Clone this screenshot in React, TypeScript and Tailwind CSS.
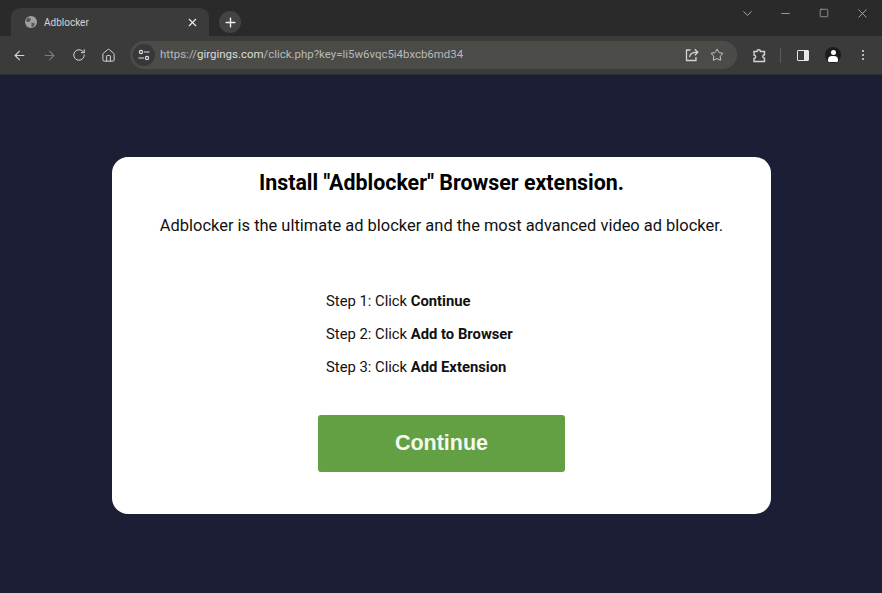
import { ArrowLeft, ArrowRight, ChevronDown, Home, Minus, Plus, RotateCw, Square, Star, X } from "lucide-react"

function Steps() {
  return (
    <div className="ml-[214px] mt-[52px] flex flex-col gap-[11px] text-[14.8px] leading-[22px] text-[#111]">
      <p>
        Step 1: Click <b className="font-bold">Continue</b>
      </p>
      <p>
        Step 2: Click <b className="font-bold">Add to Browser</b>
      </p>
      <p>
        Step 3: Click <b className="font-bold">Add Extension</b>
      </p>
    </div>
  )
}

export default function App() {
  return (
    <div className="flex h-[593px] w-[882px] flex-col overflow-hidden bg-[#1c1e36] font-['Roboto',sans-serif]">
      {/* Tab strip */}
      <div className="flex h-[36px] items-end bg-[#2a2a2a] pl-[11px]">
        <div className="flex h-[28px] w-[198px] items-center rounded-t-[9px] bg-[#3b3b3b] pl-[14px] pr-[10px] text-[#d6d6d6]">
          <svg width="12" height="12" viewBox="0 0 12 12">
            <circle cx="6" cy="6" r="6" fill="#a0a0a0" />
            <path d="M3 1.500l3 1.500-1 2.500-2.500 0.500L0.800 4.500zM6.500 6.500l3.500 1-1.500 3-2 0.500z" fill="#565656" />
          </svg>
          <span className="ml-[7px] flex-1 text-[10px]">Adblocker</span>
          <X size={13} strokeWidth={2} className="text-[#f0f0f0]" />
        </div>
        <div className="mb-[3px] ml-[10px] flex h-[22px] w-[22px] items-center justify-center rounded-full bg-[#434343]">
          <Plus size={15} strokeWidth={2.2} className="text-[#f2f2f2]" />
        </div>
        <div className="ml-auto flex h-full items-center text-[#c4c4c4]">
          <ChevronDown size={15} strokeWidth={1.3} className="mb-[10px]" />
          <Minus size={13} strokeWidth={1.3} className="mb-[10px] ml-[24px]" />
          <Square size={10} strokeWidth={1.5} className="mb-[10px] ml-[27px] rounded-[1px]" />
          <X size={15} strokeWidth={1.2} className="mb-[10px] ml-[26px] mr-[12px]" />
        </div>
      </div>

      {/* Toolbar */}
      <div className="flex h-[39px] items-center border-b border-[#2f2f33] bg-[#3b3b3b] text-[#d4d4d4]">
        <ArrowLeft size={15} strokeWidth={1.7} className="ml-[12px]" />
        <ArrowRight size={15} strokeWidth={1.7} className="ml-[15px] text-[#7c7c7c]" />
        <RotateCw size={14} strokeWidth={1.7} className="ml-[15px]" />
        <Home size={15} strokeWidth={1.6} className="ml-[15px]" />
        <div className="ml-[14px] flex h-[28px] w-[607px] items-center rounded-full bg-[#4b4b48] pl-[3px] pr-[13px]">
          <div className="flex h-[22px] w-[22px] items-center justify-center rounded-full bg-[#383838]">
            <svg width="12" height="12" viewBox="0 0 12 12" fill="none" stroke="#e0e0e0" strokeWidth="1.2">
              <circle cx="3" cy="3" r="1.6" />
              <path d="M6 3h5.500M0.500 9H6" />
              <circle cx="9" cy="9" r="1.6" />
            </svg>
          </div>
          <span className="ml-[5px] flex-1 text-[11.45px] text-[#b9b9b9]">
            https://<span className="text-[#dcdcdc]">girgings.com</span>/click.php?key=li5w6vqc5i4bxcb6md34
          </span>
          <svg className="mr-[-1px]" width="14" height="14" viewBox="0 0 14 14" fill="none" stroke="#d4d4d4" strokeWidth="1.3">
            <path d="M5.500 2H1.500v10.500h9.500V9M4.500 9C5 5.800 7.500 4.200 12.500 4.200M9.800 1.200l3 3-3 3" />
          </svg>
          <Star size={14} strokeWidth={1.6} className="ml-[12px]" />
        </div>
        <svg className="ml-[15px]" width="15" height="15" viewBox="0 0 15 15" fill="none" stroke="#d4d4d4" strokeWidth="1.4">
          <path d="M2 3.500h3a1.700 1.700 0 0 1 3.400 0h4.100v3.200a1.700 1.700 0 0 0 0 3.400v3.400H2v-3a1.700 1.700 0 0 0 0-3.400z" />
        </svg>
        <div className="ml-[13px] h-[15px] w-px bg-[#5c5c5c]" />
        <div className="ml-[16px] flex h-[11px] w-[12px] overflow-hidden rounded-[1px] border border-[#e6e6e6]">
          <div className="w-[6px] bg-transparent" />
          <div className="flex-1 bg-[#e6e6e6]" />
        </div>
        <div className="ml-[16px] flex h-[16px] w-[16px] flex-col items-center overflow-hidden rounded-full bg-[#1c1c1c]">
          <div className="mt-[3px] h-[5px] w-[5px] rounded-full bg-white" />
          <div className="mt-[1px] h-[6px] w-[10px] rounded-t-[4px] bg-white" />
        </div>
        <div className="ml-[21px] flex flex-col gap-[2px]">
          <div className="h-[2px] w-[2px] rounded-full bg-[#e0e0e0]" />
          <div className="h-[2px] w-[2px] rounded-full bg-[#e0e0e0]" />
          <div className="h-[2px] w-[2px] rounded-full bg-[#e0e0e0]" />
        </div>
      </div>

      {/* Page */}
      <div className="flex-1 px-[112px] pt-[82px]">
        <div className="h-[357px] w-[659px] rounded-[16px] bg-white pt-[12px] text-black">
          <h1 className="text-center text-[21.4px] font-bold leading-[28px]">Install "Adblocker" Browser extension.</h1>
          <p className="mt-[17px] text-center text-[16.45px] leading-[24px] text-[#111]">
            Adblocker is the ultimate ad blocker and the most advanced video ad blocker.
          </p>
          <Steps />
          <div className="ml-[206px] mt-[37px] flex h-[57px] w-[247px] items-center justify-center rounded-[3px] bg-[#63a044] font-['Liberation_Sans',sans-serif] text-[21.5px] font-bold text-[#f4f9f0]">
            Continue
          </div>
        </div>
      </div>
    </div>
  )
}
